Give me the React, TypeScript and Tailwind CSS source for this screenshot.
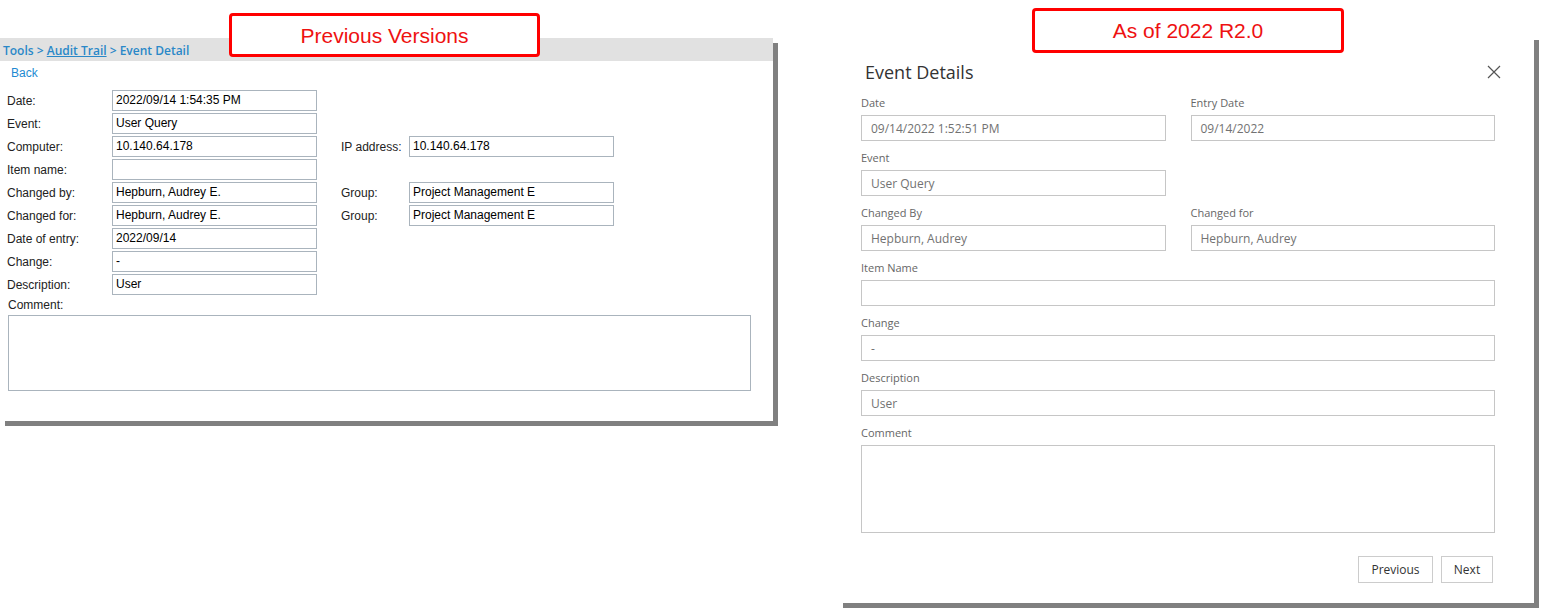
import React from 'react';

const arial = { fontFamily: '"Liberation Sans", Arial, sans-serif' };
const open = { fontFamily: '"Open Sans", "Noto Sans", sans-serif' };

const OldField = ({ value = '' }: { value?: string }) => (
  <div className="w-[205px] h-[21px] border border-[#aab4bd] bg-white pl-[3px] text-[12px] leading-[19px] text-black whitespace-nowrap overflow-hidden">
    {value}
  </div>
);

const OldRow = ({ label, value, label2, value2 }: { label: string; value?: string; label2?: string; value2?: string }) => (
  <div className="flex items-center h-[21px]">
    <div className="w-[112px] pl-[7px] text-[12px] text-[#222]">{label}</div>
    <OldField value={value} />
    {label2 && (
      <>
        <div className="w-[68px] ml-[24px] text-[12px] text-[#222]">{label2}</div>
        <OldField value={value2} />
      </>
    )}
  </div>
);

const NewField = ({ label, value = '', wide = false, tall = false }: { label: string; value?: string; wide?: boolean; tall?: boolean }) => (
  <div className={wide ? 'col-span-2' : ''}>
    <div className="h-4 text-[11px] leading-4 text-[#666] mb-1">{label}</div>
    <div
      className={`border border-[#c6c6c6] bg-white pl-[9px] text-[12px] text-[#727272] ${tall ? 'h-[88px]' : 'h-[26px] leading-[25px]'}`}
    >
      {value}
    </div>
  </div>
);

export default function App() {
  return (
    <div className="relative w-[1544px] h-[613px] bg-white overflow-hidden">
      <div className="flex items-start">
        {/* Previous version panel */}
        <div className="mt-[38px] w-[773px] h-[383px] bg-white shadow-[5px_5px_0_#808080] flex flex-col" style={arial}>
          <div className="h-[23px] bg-[#e1e1e1] pl-[3px] pt-[5px] text-[12px] leading-4 font-semibold text-[#2a88c8]" style={open}>
            Tools &gt; <span className="underline">Audit Trail</span> &gt; Event Detail
          </div>
          <div className="mt-[4px] pl-[11px] h-4 text-[12px] leading-4 text-[#1e8ad2]">Back</div>
          <div className="mt-[9px] flex flex-col gap-[2px]">
            <OldRow label="Date:" value="2022/09/14 1:54:35 PM" />
            <OldRow label="Event:" value="User Query" />
            <OldRow label="Computer:" value="10.140.64.178" label2="IP address:" value2="10.140.64.178" />
            <OldRow label="Item name:" />
            <OldRow label="Changed by:" value="Hepburn, Audrey E." label2="Group:" value2="Project Management E" />
            <OldRow label="Changed for:" value="Hepburn, Audrey E." label2="Group:" value2="Project Management E" />
            <OldRow label="Date of entry:" value="2022/09/14" />
            <OldRow label="Change:" value="-" />
            <OldRow label="Description:" value="User" />
          </div>
          <div className="pl-[8px] mt-[2px] h-4 text-[12px] leading-4 text-[#222]">Comment:</div>
          <div className="ml-[8px] mt-[2px] w-[743px] h-[76px] border border-[#aab4bd]" />
        </div>

        {/* New version panel */}
        <div className="ml-[65px] mt-[35px] w-[696px] h-[568px] bg-white shadow-[5px_5px_0_#808080] pl-[23px] pr-[39px] pt-[27px]" style={open}>
          <div className="flex items-center justify-between h-5">
            <div className="ml-[4px] text-[18px] leading-5 text-[#333]">Event Details</div>
            <svg width="14" height="14" viewBox="0 0 14 14" className="mr-[-6px]">
              <path d="M1 1L13 13M13 1L1 13" stroke="#555" strokeWidth="1.2" fill="none" />
            </svg>
          </div>
          <div className="mt-[13px] grid grid-cols-2 gap-x-[25px] gap-y-[9px]">
            <NewField label="Date" value="09/14/2022 1:52:51 PM" />
            <NewField label="Entry Date" value="09/14/2022" />
            <NewField label="Event" value="User Query" />
            <div />
            <NewField label="Changed By" value="Hepburn, Audrey" />
            <NewField label="Changed for" value="Hepburn, Audrey" />
            <NewField label="Item Name" wide />
            <NewField label="Change" value="-" wide />
            <NewField label="Description" value="User" wide />
            <NewField label="Comment" wide tall />
          </div>
          <div className="mt-[23px] mr-[2px] flex justify-end gap-2">
            <button className="w-[75px] h-[27px] border border-[#cccccc] bg-white text-[12px] text-[#333]">Previous</button>
            <button className="w-[52px] h-[27px] border border-[#cccccc] bg-white text-[12px] text-[#333]">Next</button>
          </div>
        </div>
      </div>

      {/* Callouts */}
      <div
        className="absolute left-[229px] top-[13px] w-[311px] h-[44px] border-[3px] border-[#ff0000] rounded-[4px] bg-white flex items-center justify-center pt-[2px] text-[21px] text-[#ee1111]"
        style={arial}
      >
        Previous Versions
      </div>
      <div
        className="absolute left-[1032px] top-[8px] w-[312px] h-[45px] border-[3px] border-[#ff0000] rounded-[4px] bg-white flex items-center justify-center text-[21px] text-[#ee1111]"
        style={arial}
      >
        As of 2022 R2.0
      </div>
    </div>
  );
}
